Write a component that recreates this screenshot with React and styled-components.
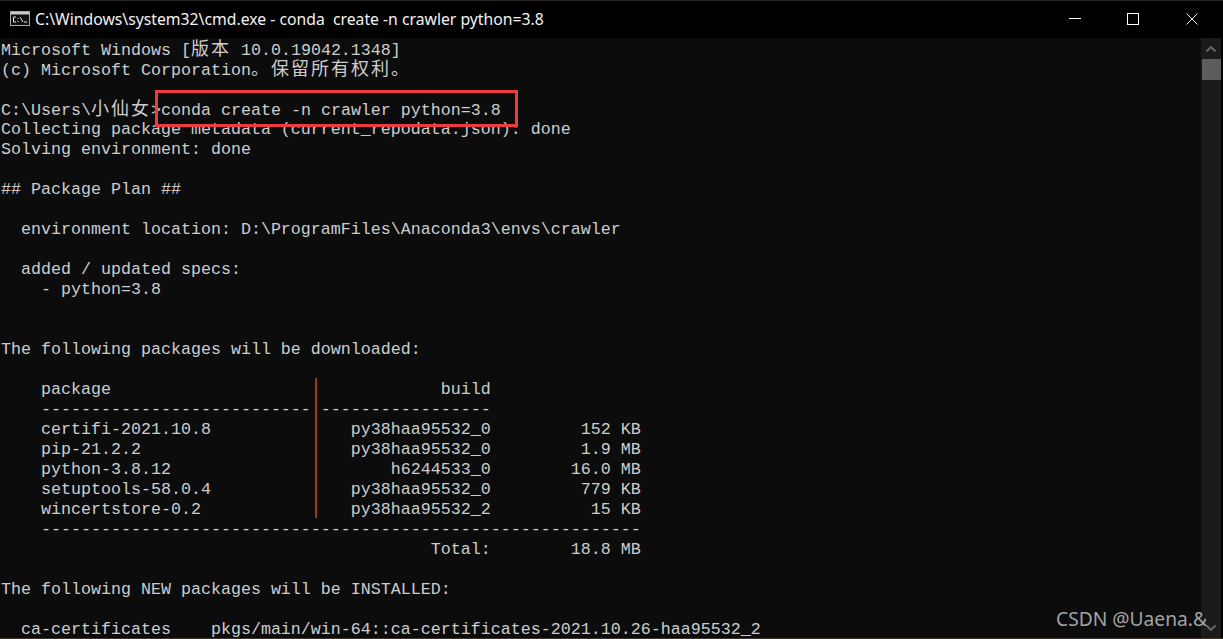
import React from "react";
import styled, { createGlobalStyle } from "styled-components";

const GlobalStyle = createGlobalStyle`
  html, body {
    margin: 0;
    padding: 0;
    background: #000;
    overflow: hidden;
  }
`

const Window = styled.div`
  position: relative;
  display: flex;
  flex-direction: column;
  width: 1223px;
  height: 639px;
  overflow: hidden;
  background: #000;
  border-top: 1px solid #2a2622;
  border-bottom: 1px solid #3a342c;
  box-sizing: border-box;
`

const TitleBar = styled.div`
  display: flex;
  align-items: center;
  flex: 0 0 37px;
  padding: 0 2px 0 10px;
  background: #000;
`

const IconBox = styled.div`
  display: flex;
  margin-bottom: 3px;
`

const Title = styled.span`
  flex: 1;
  margin: 0 0 2px 5px;
  font-family: "Noto Sans", sans-serif;
  font-size: 15.75px;
  color: #f2f2f2;
  white-space: pre;
`

const WinButton = styled.div`
  display: flex;
  align-items: center;
  justify-content: center;
  box-sizing: border-box;
  width: 58px;
  height: 100%;
  padding-bottom: 1px;
  margin-left: ${props => props.$close ? "1px" : "0"};
`

const Body = styled.div`
  display: flex;
  flex: 1;
  min-height: 0;
`

const Console = styled.div`
  position: relative;
  flex: 1;
  padding: 2px 0 0 1px;
  background: #0c0c0c;
  overflow: hidden;
  font-family: "Liberation Mono", "Noto Sans CJK SC", monospace;
  font-size: 16.67px;
  color: #cccccc;
`

const Line = styled.div`
  height: 20px;
  line-height: 20px;
  white-space: pre;
`

const Cjk = styled.span`
  font-family: "Noto Sans CJK SC", sans-serif;
  font-size: 18px;
  letter-spacing: 2px;
  line-height: 14px;
`

const Highlight = styled.div`
  position: absolute;
  left: 155px;
  top: 52px;
  width: 363px;
  height: 37px;
  box-sizing: border-box;
  border: 3px solid #ee3b3f;
`

const Divider = styled.div`
  position: absolute;
  left: 315px;
  top: 340px;
  width: 1px;
  height: 140px;
  background: #1d5f86;
  border-right: 1px solid #a5420f;
`

const ScrollBar = styled.div`
  display: flex;
  flex-direction: column;
  align-items: center;
  flex: 0 0 20px;
  margin-right: 2px;
  background: #1b1b1b;
`

const ScrollArrow = styled.div`
  display: flex;
  align-items: center;
  justify-content: center;
  flex: 0 0 21px;
  width: 100%;
`

const ScrollThumb = styled.div`
  width: 19px;
  height: 21px;
  margin-left: 1px;
  background: #5c5c5c;
`

const ScrollTrack = styled.div`
  flex: 1;
`

const Watermark = styled.div`
  position: absolute;
  right: 16px;
  bottom: 6px;
  font-family: "Noto Sans", sans-serif;
  font-size: 19.2px;
  line-height: 26px;
  color: #a3a3a3;
`

const CmdIcon = () => (
    <svg width="20" height="15" viewBox="0 0 20 15">
        <rect x="0.5" y="0.5" width="19" height="14" fill="#111" stroke="#a8a8a8"/>
        <rect x="1" y="1" width="18" height="2.5" fill="#c9c9c9"/>
        <path d="M6 6H3.5V11H6M8 7v1M8 10v1M10 6l3 5M14 11h3" fill="none" stroke="#e4e4e4" strokeWidth="1"/>
    </svg>
)

const lines = [
    <>Microsoft Windows [<Cjk>版本</Cjk> 10.0.19042.1348]</>,
    <>(c) Microsoft Corporation<Cjk>。保留所有权利。</Cjk></>,
    "",
    <>C:\Users\<Cjk>小仙女</Cjk>&gt;conda create -n crawler python=3.8</>,
    "Collecting package metadata (current_repodata.json): done",
    "Solving environment: done",
    "",
    "## Package Plan ##",
    "",
    "  environment location: D:\\ProgramFiles\\Anaconda3\\envs\\crawler",
    "",
    "  added / updated specs:",
    "    - python=3.8",
    "",
    "",
    "The following packages will be downloaded:",
    "",
    "    package                                 build",
    "    --------------------------- -----------------",
    "    certifi-2021.10.8              py38haa95532_0         152 KB",
    "    pip-21.2.2                     py38haa95532_0         1.9 MB",
    "    python-3.8.12                      h6244533_0        16.0 MB",
    "    setuptools-58.0.4              py38haa95532_0         779 KB",
    "    wincertstore-0.2               py38haa95532_2          15 KB",
    "    ------------------------------------------------------------",
    "                                           Total:        18.8 MB",
    "",
    "The following NEW packages will be INSTALLED:",
    "",
    "  ca-certificates    pkgs/main/win-64::ca-certificates-2021.10.26-haa95532_2",
]

function App() {
    return (
        <Window>
            <GlobalStyle/>
            <TitleBar>
                <IconBox><CmdIcon/></IconBox>
                <Title>{"C:\\Windows\\system32\\cmd.exe - conda  create -n crawler python=3.8"}</Title>
                <WinButton>
                    <svg width="12" height="12" viewBox="0 0 12 12"><path d="M0 5.5H12" stroke="#fff"/></svg>
                </WinButton>
                <WinButton>
                    <svg width="12" height="12" viewBox="0 0 12 12"><rect x="0.5" y="0.5" width="11" height="11" fill="none" stroke="#fff"/></svg>
                </WinButton>
                <WinButton $close>
                    <svg width="12" height="12" viewBox="0 0 12 12"><path d="M0.5 0.5L11.5 11.5M11.5 0.5L0.5 11.5" stroke="#e8e8e8"/></svg>
                </WinButton>
            </TitleBar>
            <Body>
                <Console>
                    {lines.map((line, i) => <Line key={i}>{line}</Line>)}
                    <Highlight/>
                    <Divider/>
                </Console>
                <ScrollBar>
                    <ScrollArrow>
                        <svg width="10" height="6" viewBox="0 0 10 6"><path d="M0.5 5.5L5 1L9.5 5.5" fill="none" stroke="#666" strokeWidth="2"/></svg>
                    </ScrollArrow>
                    <ScrollThumb/>
                    <ScrollTrack/>
                    <ScrollArrow>
                        <svg width="10" height="6" viewBox="0 0 10 6"><path d="M0.5 0.5L5 5L9.5 0.5" fill="none" stroke="#666" strokeWidth="2"/></svg>
                    </ScrollArrow>
                </ScrollBar>
            </Body>
            <Watermark>CSDN @Uaena.&amp;</Watermark>
        </Window>
    )
}

export default App;
